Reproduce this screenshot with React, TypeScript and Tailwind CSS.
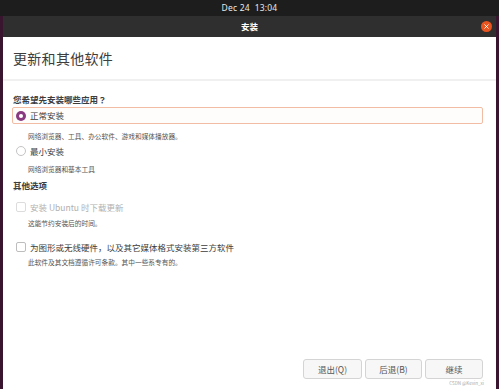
import React from 'react'

// Ubuntu installer — "更新和其他软件" step

const CJK = { fontFamily: '"Noto Sans CJK SC", "Noto Sans", sans-serif' }

function Radio({ checked }: { checked?: boolean }) {
  return checked ? (
    <span className="w-[10px] h-[10px] rounded-full bg-[#8a3a80] flex items-center justify-center shrink-0">
      <span className="w-[4px] h-[4px] rounded-full bg-white" />
    </span>
  ) : (
    <span className="w-[10px] h-[10px] rounded-full border border-[#c4c4c4] bg-white shrink-0" />
  )
}

function Checkbox({ disabled }: { disabled?: boolean }) {
  return (
    <span
      className={
        'w-[10px] h-[10px] rounded-[2px] border bg-white shrink-0 ' +
        (disabled ? 'border-[#dcdcdc]' : 'border-[#bdbdbd]')
      }
    />
  )
}

function Button({ label }: { label: string }) {
  return (
    <button className="w-full h-[20px] rounded-[3px] border border-[#d4d4d4] bg-[#f7f7f7] text-[8.5px] text-[#555] flex items-center justify-center">
      {label}
    </button>
  )
}

export default function App() {
  return (
    <div className="w-[499px] h-[389px] bg-[#3a1530] flex flex-col overflow-hidden" style={CJK}>
      {/* top panel */}
      <div className="h-[16px] bg-[#1d1d1d] flex items-center justify-center shrink-0">
        <span className="text-[8.5px] text-[#e8e8e8] tracking-[0.2px]" style={{ fontFamily: '"Noto Sans", sans-serif' }}>
          Dec 24&nbsp;&nbsp;13:04
        </span>
      </div>

      {/* window */}
      <div className="flex-1 flex flex-col ml-[3px] mr-[3px] bg-white">
        {/* title bar */}
        <div className="h-[21px] bg-[#2f2f2f] flex items-center justify-center relative shrink-0">
          <span className="text-[8.5px] text-white font-bold">安装</span>
          <span className="absolute right-[4px] top-[5px] w-[11px] h-[11px] rounded-full bg-[#e9541f] flex items-center justify-center">
            <svg width="5" height="5" viewBox="0 0 6 6">
              <path d="M1 1L5 5M5 1L1 5" stroke="white" strokeWidth="1.2" strokeLinecap="round" />
            </svg>
          </span>
        </div>

        {/* heading */}
        <div className="h-[44px] flex items-center px-[10px] border-b-2 border-[#f0f0f0] shrink-0">
          <h1 className="text-[14px] text-[#3d3d3d] tracking-[0.3px]">更新和其他软件</h1>
        </div>

        {/* body */}
        <div className="flex-1 flex flex-col px-[10px] pt-[12px]">
          <p className="text-[8.5px] font-bold text-[#3c3c3c] leading-[12px]">
            您希望先安装哪些应用<span style={{ fontFamily: '"Noto Sans CJK JP", sans-serif' }}>？</span>
          </p>

          <div className="mt-[2px] h-[17px] mr-[3px] -ml-[1px] border border-[#f2bca4] rounded-[2px] bg-[#fffdfb] flex items-center gap-[4px] pl-[3px]">
            <Radio checked />
            <span className="text-[8.5px] text-[#3c3c3c]">正常安装</span>
          </div>
          <p className="mt-[6px] ml-[15px] text-[6.7px] text-[#555] leading-[12px]">网络浏览器、工具、办公软件、游戏和媒体播放器。</p>

          <div className="mt-[3px] h-[12px] flex items-center gap-[4px] pl-[3px]">
            <Radio />
            <span className="text-[8.5px] text-[#3c3c3c]">最小安装</span>
          </div>
          <p className="mt-[6px] ml-[15px] text-[6.7px] text-[#555] leading-[12px]">网络浏览器和基本工具</p>

          <p className="mt-[4px] text-[8.5px] font-bold text-[#3c3c3c] leading-[12px]">其他选项</p>

          <div className="mt-[10px] h-[12px] flex items-center gap-[4px] pl-[3px]">
            <Checkbox disabled />
            <span className="text-[8.5px] text-[#b0b0b0]">安装 Ubuntu 时下载更新</span>
          </div>
          <p className="mt-[4px] ml-[15px] text-[6.7px] text-[#555] leading-[12px]">这能节约安装后的时间。</p>

          <div className="mt-[12px] h-[12px] flex items-center gap-[4px] pl-[3px]">
            <Checkbox />
            <span className="text-[8.5px] text-[#3c3c3c]">为图形或无线硬件，以及其它媒体格式安装第三方软件</span>
          </div>
          <p className="mt-[3px] ml-[15px] text-[6.7px] text-[#555] leading-[12px]">此软件及其文档遵循许可条款。其中一些系专有的。</p>

          {/* footer buttons */}
          <div className="mt-auto mb-[10px] flex justify-end gap-[3px] pr-[3px] relative">
            <div className="w-[59px]"><Button label="退出(Q)" /></div>
            <div className="w-[57px]"><Button label="后退(B)" /></div>
            <div className="w-[58px]"><Button label="继续" /></div>
            <span className="absolute right-[2px] -bottom-[8px] text-[4.5px] text-[#aaa]">CSDN @Kevin_xi</span>
          </div>
        </div>
      </div>
    </div>
  )
}
